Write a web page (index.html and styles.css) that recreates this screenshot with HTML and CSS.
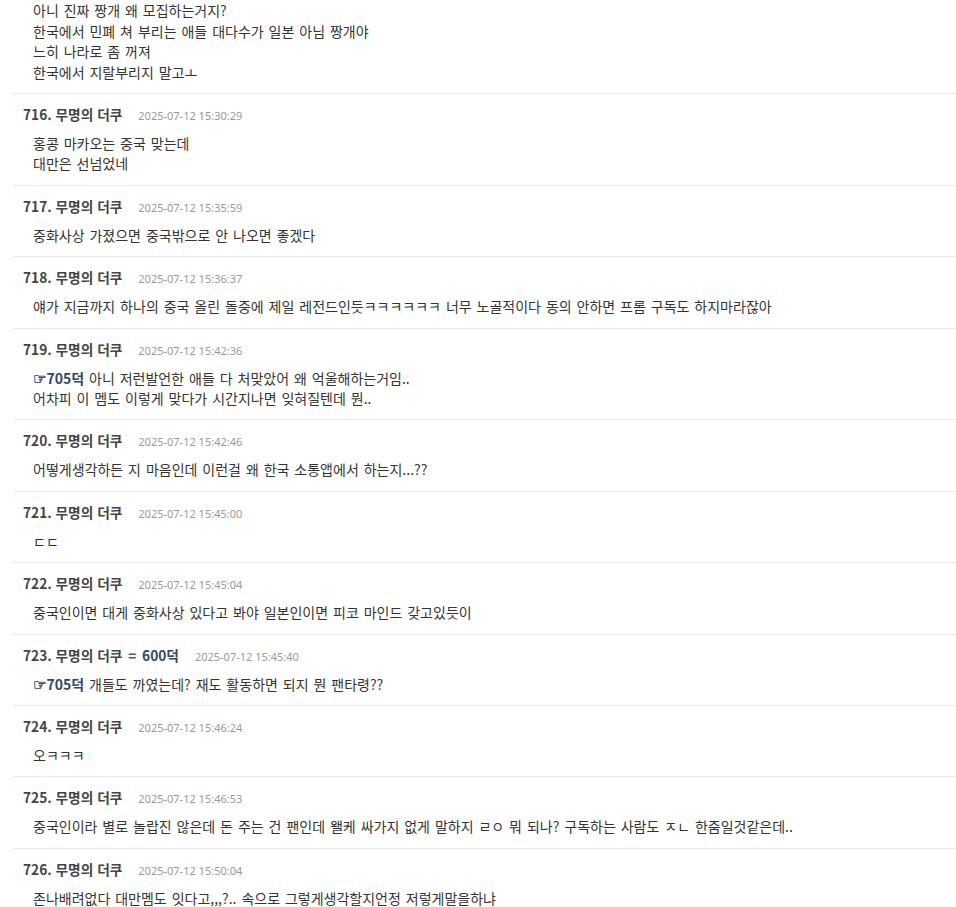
FILE: index.html
```html
<!DOCTYPE html>
<html lang="ko">
<head>
<meta charset="utf-8">
<title>댓글</title>
<link rel="stylesheet" href="styles.css">
</head>
<body>
<ul class="comments">
  <li class="comment comment-cont">
    <div class="body">아니 진짜 짱개 왜 모집하는거지?<br>한국에서 민폐 쳐 부리는 애들 대다수가 일본 아님 짱개야<br>느히 나라로 좀 꺼져<br>한국에서 지랄부리지 말고ㅗ</div>
  </li>
  <li class="comment">
    <div class="head"><span class="name">716. 무명의 더쿠</span><span class="date">2025-07-12 15:30:29</span></div>
    <div class="body">홍콩 마카오는 중국 맞는데<br>대만은 선넘었네</div>
  </li>
  <li class="comment">
    <div class="head"><span class="name">717. 무명의 더쿠</span><span class="date">2025-07-12 15:35:59</span></div>
    <div class="body">중화사상 가졌으면 중국밖으로 안 나오면 좋겠다</div>
  </li>
  <li class="comment">
    <div class="head"><span class="name">718. 무명의 더쿠</span><span class="date">2025-07-12 15:36:37</span></div>
    <div class="body">얘가 지금까지 하나의 중국 올린 돌중에 제일 레전드인듯ㅋㅋㅋㅋㅋㅋ 너무 노골적이다 동의 안하면 프롬 구독도 하지마라잖아</div>
  </li>
  <li class="comment">
    <div class="head"><span class="name">719. 무명의 더쿠</span><span class="date">2025-07-12 15:42:36</span></div>
    <div class="body"><a class="ref"><span class="hand">☞</span>705덕</a> 아니 저런발언한 애들 다 처맞았어 왜 억울해하는거임..<br>어차피 이 멤도 이렇게 맞다가 시간지나면 잊혀질텐데 뭔..</div>
  </li>
  <li class="comment">
    <div class="head"><span class="name">720. 무명의 더쿠</span><span class="date">2025-07-12 15:42:46</span></div>
    <div class="body">어떻게생각하든 지 마음인데 이런걸 왜 한국 소통앱에서 하는지...??</div>
  </li>
  <li class="comment">
    <div class="head"><span class="name">721. 무명의 더쿠</span><span class="date">2025-07-12 15:45:00</span></div>
    <div class="body">ㄷㄷ</div>
  </li>
  <li class="comment">
    <div class="head"><span class="name">722. 무명의 더쿠</span><span class="date">2025-07-12 15:45:04</span></div>
    <div class="body">중국인이면 대게 중화사상 있다고 봐야 일본인이면 피코 마인드 갖고있듯이</div>
  </li>
  <li class="comment">
    <div class="head"><span class="name">723. 무명의 더쿠 <span class="eq">=</span> <span class="same">600덕</span></span><span class="date">2025-07-12 15:45:40</span></div>
    <div class="body"><a class="ref"><span class="hand">☞</span>705덕</a> 개들도 까였는데? 재도 활동하면 되지 뭔 팬타령??</div>
  </li>
  <li class="comment">
    <div class="head"><span class="name">724. 무명의 더쿠</span><span class="date">2025-07-12 15:46:24</span></div>
    <div class="body">오ㅋㅋㅋ</div>
  </li>
  <li class="comment">
    <div class="head"><span class="name">725. 무명의 더쿠</span><span class="date">2025-07-12 15:46:53</span></div>
    <div class="body">중국인이라 별로 놀랍진 않은데 돈 주는 건 팬인데 왤케 싸가지 없게 말하지 ㄹㅇ 뭐 되나? 구독하는 사람도 ㅈㄴ 한줌일것같은데..</div>
  </li>
  <li class="comment">
    <div class="head"><span class="name">726. 무명의 더쿠</span><span class="date">2025-07-12 15:50:04</span></div>
    <div class="body">존나배려없다 대만멤도 잇다고,,,?.. 속으로 그렇게생각할지언정 저렇게말을하냐</div>
  </li>
</ul>
</body>
</html>
```

FILE: styles.css
```css
html, body {
  margin: 0;
  padding: 0;
  background: #fff;
}

body {
  font-family: "Noto Sans CJK KR", "Noto Sans", sans-serif;
  color: #333;
}

.comments {
  list-style: none;
  margin: 0 0 0 13px;
  padding: 0;
}

.comment {
  padding: 10px 0 10.9px;
  border-bottom: 1px solid #eaeaea;
}

.comment-cont {
  padding-top: 0;
}

.head {
  display: flex;
  align-items: baseline;
  padding-left: 10px;
  line-height: 20px;
  height: 20px;
}

.name {
  font-size: 13.7px;
  font-weight: bold;
  color: #444;
}

.eq {
  color: #4d5a70;
  margin: 0 2px;
}

.same {
  color: #34466a;
}

.date {
  margin-left: 16px;
  font-size: 11px;
  color: #999;
  font-family: "Noto Sans", "Noto Sans CJK KR", sans-serif;
}

.body {
  margin-top: 9px;
  padding-left: 20px;
  font-size: 14px;
  line-height: 20.5px;
  word-spacing: 1px;
  color: #333;
}

.comment-cont .body {
  margin-top: 0;
}

.ref {
  color: #2f4670;
  font-weight: bold;
  text-decoration: none;
}

.hand {
  font-family: "DejaVu Sans", sans-serif;
  font-weight: bold;
  font-size: 15px;
  line-height: 0;
  -webkit-text-stroke: 0.4px #2f4670;
}
```
